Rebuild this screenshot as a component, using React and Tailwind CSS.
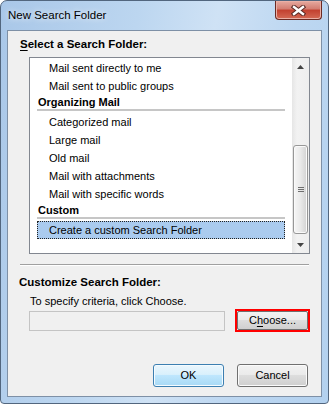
import React from 'react';

const font = "font-['Liberation_Sans',Arial,sans-serif]";

const Item = ({ children }) => (
  <div className="h-[18px] flex items-center pl-[12px] text-[11px] text-black">{children}</div>
);

const Heading = ({ children }) => (
  <div className="h-[18px] flex flex-col">
    <div className="h-[14px] leading-[14px] pl-[1px] text-[11px] font-bold text-black">{children}</div>
    <div className="h-[2px] bg-[#c6c6c6]" />
  </div>
);

const Arrow = ({ up }) => (
  <svg width="7" height="4" viewBox="0 0 7 4">
    {up ? <path d="M0 4 L3.5 0 L7 4 Z" fill="#444" /> : <path d="M0 0 L7 0 L3.5 4 Z" fill="#444" />}
  </svg>
);

const Scrollbar = () => (
  <div className="w-[17px] flex flex-col bg-[linear-gradient(to_right,#e6e6e6,#f2f2f2_30%,#eeeeee)]">
    <div className="h-[17px] flex items-center justify-center">
      <Arrow up />
    </div>
    <div className="flex-1 flex flex-col">
      <div className="mt-[70px] h-[89px] mx-[1px] rounded-[3px] border border-[#979797] bg-[linear-gradient(to_right,#f6f6f6,#e9e9e9_50%,#d2d2d2)] flex flex-col items-center justify-center gap-[1px] shadow-[inset_0_0_0_1px_#fafafa]">
        <div className="w-[6px] h-[1px] bg-[#6e6e6e]" />
        <div className="w-[6px] h-[1px] bg-[#6e6e6e]" />
        <div className="w-[6px] h-[1px] bg-[#6e6e6e]" />
      </div>
    </div>
    <div className="h-[17px] flex items-center justify-center">
      <Arrow />
    </div>
  </div>
);

const Button = ({ children, primary }) => (
  <div
    className={
      'w-[71px] h-[23px] rounded-[3px] border flex items-center justify-center text-[11px] text-black ' +
      (primary
        ? 'border-[#3c7fb1] bg-[linear-gradient(#eaf6fd,#d9f0fc_45%,#bee6fd_50%,#a7d9f5)] shadow-[inset_0_0_0_1px_#f4fbff]'
        : 'border-[#707070] bg-[linear-gradient(#f2f2f2,#ebebeb_45%,#dddddd_50%,#cfcfcf)] shadow-[inset_0_0_0_1px_#fbfbfb]')
    }
  >
    {children}
  </div>
);

export default function App() {
  return (
    <div className={`${font} w-[329px] h-[404px] flex flex-col rounded-t-[7px] rounded-b-[4px] border border-[#52667e] bg-[linear-gradient(100deg,#a9c7e8,#bcd6f0_35%,#cfe2f5_55%,#bdd7f1_75%,#b3d1ef)] px-[6px] pb-[6px]`}>
      {/* title bar */}
      <div className="h-[29px] flex items-start">
        <div className="flex-1 h-[29px] flex items-center pl-[1px] text-[11.5px] text-black [text-shadow:0_0_6px_#ffffff]">
          New Search Folder
        </div>
        <div className="w-[47px] h-[19px] rounded-b-[4px] border border-t-0 border-[#6b2a23] bg-[linear-gradient(#e6aaa0,#d27c70_45%,#c2402f_50%,#d46a55)] flex items-center justify-center shadow-[inset_0_0_0_1px_#eab0a6]">
          <svg width="15" height="11" viewBox="0 0 15 11">
            <path d="M3 2 L12 9 M12 2 L3 9" stroke="#5a2a25" strokeWidth="4.4" strokeLinecap="square" />
            <path d="M3 2 L12 9 M12 2 L3 9" stroke="#ffffff" strokeWidth="2.4" strokeLinecap="square" />
          </svg>
        </div>
      </div>

      {/* client area */}
      <div className="flex-1 flex flex-col border border-[#7e90a6] bg-[#f0f0f0]">
        <div className="mt-[6px] ml-[12px] h-[14px] leading-[14px] text-[11.5px] font-bold text-black">
          <u className="underline-offset-[2px]">S</u>elect a Search Folder:
        </div>

        <div className="mt-[6px] ml-[21px] w-[281px] h-[197px] border border-[#828790] bg-white flex">
          <div className="flex-1 pt-[1px] pl-[7px] pr-[7px]">
            <Item>Mail sent directly to me</Item>
            <Item>Mail sent to public groups</Item>
            <Heading>Organizing Mail</Heading>
            <Item>Categorized mail</Item>
            <Item>Large mail</Item>
            <Item>Old mail</Item>
            <Item>Mail with attachments</Item>
            <Item>Mail with specific words</Item>
            <Heading>Custom</Heading>
            <div className="h-[18px] flex items-center pl-[11px] border border-dotted border-[#222] bg-[#aacbef] text-[11px] text-black">
              Create a custom Search Folder
            </div>
          </div>
          <Scrollbar />
        </div>

        <div className="mt-[10px] ml-[12px] w-[289px] border-t border-[#a0a0a0] border-b border-b-white" />

        <div className="mt-[9px] ml-[11px] h-[14px] leading-[14px] text-[11.5px] font-bold text-black">
          Customize Search Folder:
        </div>
        <div className="mt-[5px] ml-[22px] h-[14px] leading-[14px] text-[11px] text-black">
          To specify criteria, click Choose.
        </div>

        <div className="mt-[1px] ml-[21px] flex items-center gap-[10px]">
          <div className="w-[196px] h-[20px] border border-[#c4c4c4] bg-[#f0f0f0]" />
          <div className="border-2 border-[#ff0000]">
            <div className="w-[71px] h-[19px] rounded-[2px] border border-[#707070] bg-[linear-gradient(#f2f2f2,#ebebeb_45%,#dddddd_50%,#cfcfcf)] flex items-center justify-center text-[11px] text-black">
              C<u className="underline-offset-[2px]">h</u>oose...
            </div>
          </div>
        </div>

        <div className="mt-auto mb-[9px] mr-[13px] flex justify-end gap-[13px]">
          <Button primary>OK</Button>
          <Button>Cancel</Button>
        </div>
      </div>
    </div>
  );
}
